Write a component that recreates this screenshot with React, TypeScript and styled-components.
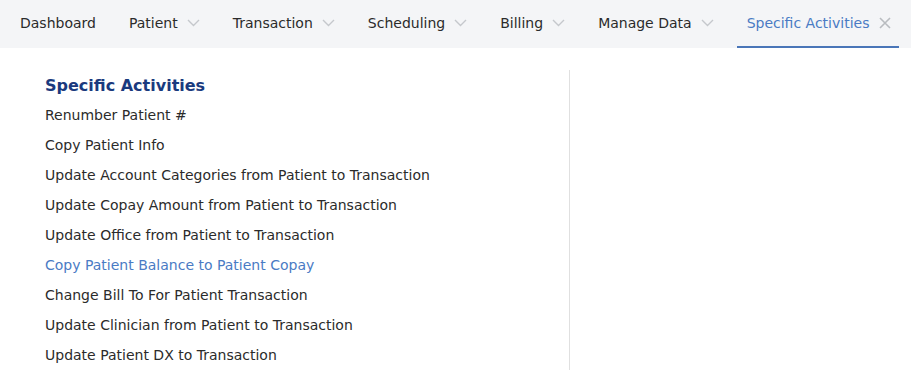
import React from "react";
import styled, { createGlobalStyle } from "styled-components";

const GlobalStyle = createGlobalStyle`
    html, body {
        margin: 0;
        padding: 0;
        background: #ffffff;
        font-family: "DejaVu Sans", Verdana, sans-serif;
    }
`;

const tabs = [
    { label: "Dashboard", menu: false },
    { label: "Patient", menu: true },
    { label: "Transaction", menu: true },
    { label: "Scheduling", menu: true },
    { label: "Billing", menu: true },
    { label: "Manage Data", menu: true },
];

const activities = [
    "Renumber Patient #",
    "Copy Patient Info",
    "Update Account Categories from Patient to Transaction",
    "Update Copay Amount from Patient to Transaction",
    "Update Office from Patient to Transaction",
    "Copy Patient Balance to Patient Copay",
    "Change Bill To For Patient Transaction",
    "Update Clinician from Patient to Transaction",
    "Update Patient DX to Transaction",
];

const Chevron = () => (
    <svg width="13" height="8" viewBox="0 0 13 8" fill="none">
        <path d="M1 1l5.5 5.5L12 1" stroke="#c5c8cc" strokeWidth="1.4" />
    </svg>
);

const Close = () => (
    <svg width="12" height="12" viewBox="0 0 12 12" fill="none">
        <path d="M1 1l10 10M11 1L1 11" stroke="#b9bcc0" strokeWidth="1.6" />
    </svg>
);

const App = () => {
    return (
        <>
            <GlobalStyle />
            <Page>
                <NavBar>
                    {tabs.map((t) => (
                        <Tab key={t.label}>
                            <TabLabel>{t.label}</TabLabel>
                            {t.menu && <Chevron />}
                        </Tab>
                    ))}
                    <Tab $active>
                        <TabLabel>Specific Activities</TabLabel>
                        <Close />
                    </Tab>
                </NavBar>
                <Panel>
                    <Column>
                        <Heading>Specific Activities</Heading>
                        {activities.map((a, i) => (
                            <Item key={a} $hover={i === 5}>{a}</Item>
                        ))}
                    </Column>
                    <Divider />
                </Panel>
            </Page>
        </>
    );
};

const Page = styled("div")`
    width: 911px;
    height: 383px;
    background: #ffffff;
`;

const NavBar = styled("div")`
    display: flex;
    align-items: stretch;
    height: 48px;
    background: #f4f5f7;
    padding-left: 10px;
    gap: 13px;
`;

const Tab = styled("div")<{ $active?: boolean }>`
    display: flex;
    align-items: center;
    gap: ${(p) => (p.$active ? "10px" : "9px")};
    padding: 0 ${(p) => (p.$active ? "8px" : "10px")} 0 10px;
    box-sizing: border-box;
    font-size: 14px;
    color: ${(p) => (p.$active ? "#4a7bc4" : "#2b2b2b")};
    border-bottom: 2px solid ${(p) => (p.$active ? "#4a76b8" : "transparent")};
`;

const TabLabel = styled("span")`
    white-space: nowrap;
`;

const Panel = styled("div")`
    display: flex;
    padding-top: 22px;
`;

const Column = styled("div")`
    width: 524px;
    padding-left: 45px;
    display: flex;
    flex-direction: column;
`;

const Heading = styled("div")`
    font-size: 16px;
    font-weight: bold;
    color: #1a3a7e;
    height: 30px;
    line-height: 31px;
`;

const Item = styled("div")<{ $hover?: boolean }>`
    font-size: 14px;
    height: 30px;
    line-height: 31px;
    color: ${(p) => (p.$hover ? "#4a7bc4" : "#2b2b2b")};
    white-space: nowrap;
`;

const Divider = styled("div")`
    width: 1px;
    height: 300px;
    background: #e0e0e0;
`;

export default App;
